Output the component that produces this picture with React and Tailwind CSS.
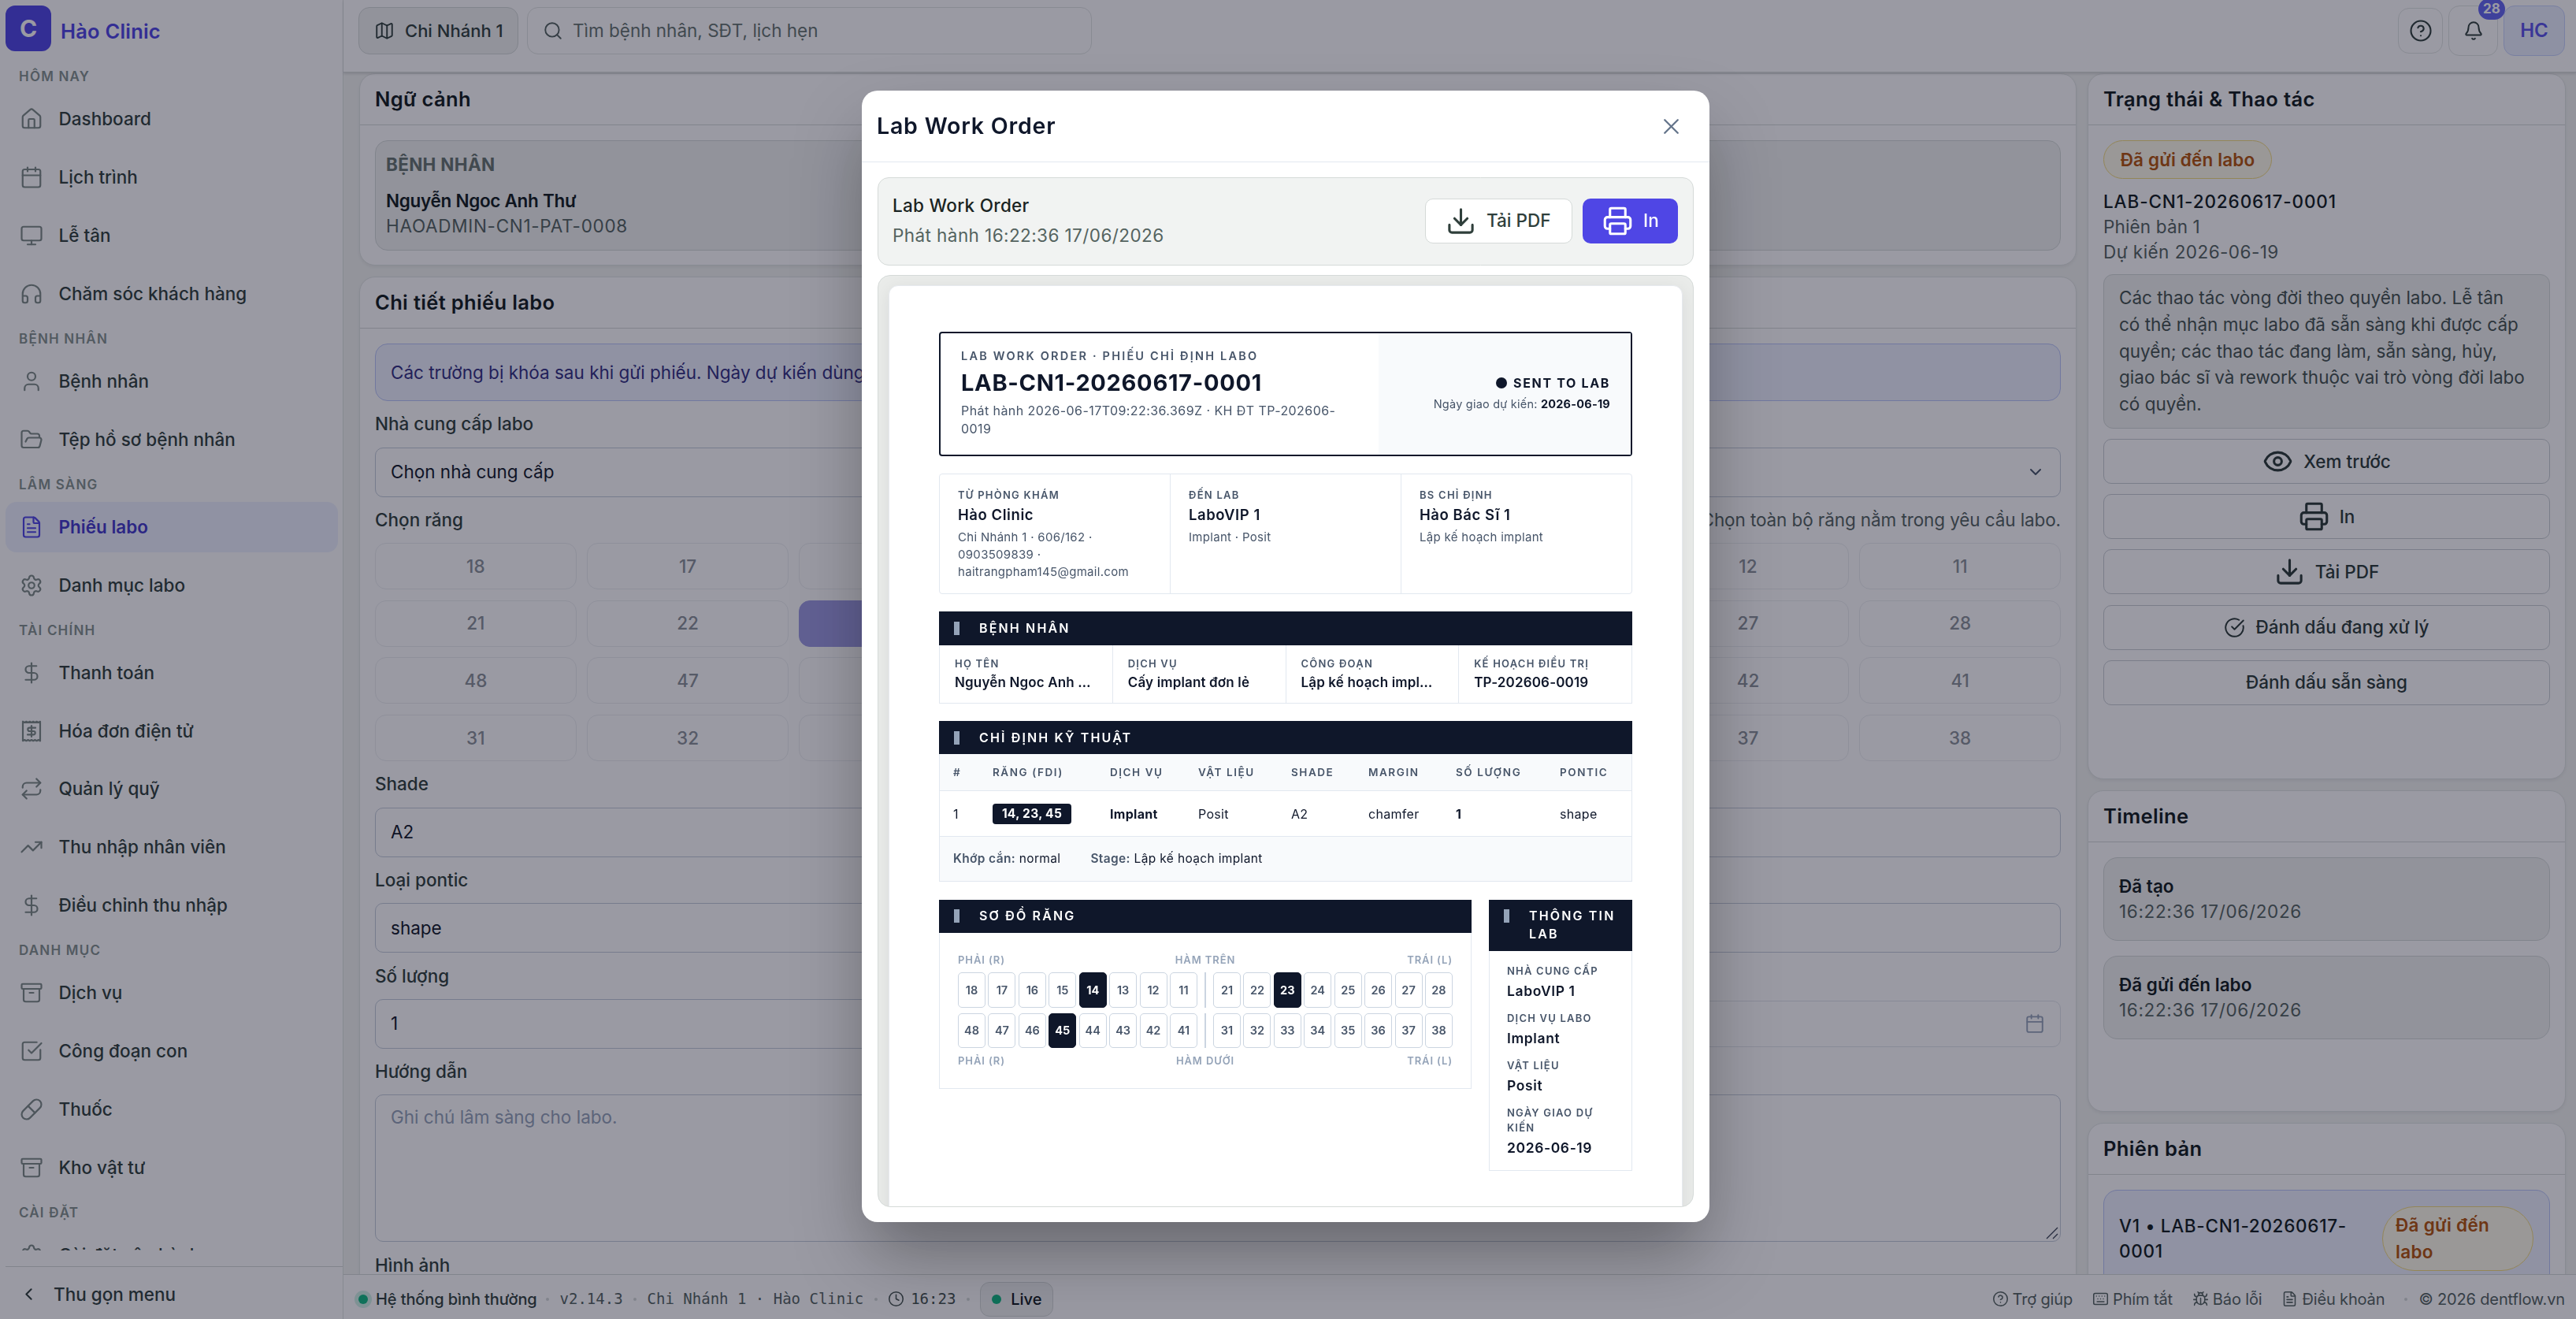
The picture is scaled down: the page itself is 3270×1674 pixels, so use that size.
import React from "react";
import {
  Archive,
  Bell,
  Bug,
  Calendar,
  ChevronDown,
  ChevronLeft,
  CircleCheckBig,
  CircleQuestionMark,
  Clock,
  DollarSign,
  Download,
  Eye,
  FileText,
  FolderOpen,
  Headphones,
  House,
  Keyboard,
  Map,
  Monitor,
  Pill,
  Printer,
  Repeat,
  Search,
  Settings,
  SquareCheckBig,
  TrendingUp,
  User,
  X,
} from "lucide-react";

// Receipt with a zigzag top and bottom edge and a dollar sign inside
function ReceiptDollar({ size = 24, strokeWidth = 2, className }) {
  return (
    <svg
      width={size}
      height={size}
      viewBox="0 0 24 24"
      fill="none"
      stroke="currentColor"
      strokeWidth={strokeWidth}
      strokeLinecap="round"
      strokeLinejoin="round"
      className={className}
    >
      <path d="M3.2 2.2v19.6l1.76-1 1.76 1 1.76-1 1.76 1 1.76-1 1.76 1 1.76-1 1.76 1 1.76-1 1.76 1V2.2l-1.76 1-1.76-1-1.76 1-1.76-1-1.76 1-1.76-1-1.76 1-1.76-1-1.76 1z" />
      <path d="M16 8.5h-6a1.75 1.75 0 1 0 0 3.5h4a1.75 1.75 0 1 1 0 3.5H8" />
      <path d="M12 17.5v-11" />
    </svg>
  );
}

const NAV = [
  {
    title: "HÔM NAY",
    items: [
      { label: "Dashboard", icon: House },
      { label: "Lịch trình", icon: Calendar },
      { label: "Lễ tân", icon: Monitor },
      { label: "Chăm sóc khách hàng", icon: Headphones },
    ],
  },
  {
    title: "BỆNH NHÂN",
    items: [
      { label: "Bệnh nhân", icon: User },
      { label: "Tệp hồ sơ bệnh nhân", icon: FolderOpen },
    ],
  },
  {
    title: "LÂM SÀNG",
    items: [
      { label: "Phiếu labo", icon: FileText, active: true },
      { label: "Danh mục labo", icon: Settings },
    ],
  },
  {
    title: "TÀI CHÍNH",
    items: [
      { label: "Thanh toán", icon: DollarSign },
      { label: "Hóa đơn điện tử", icon: ReceiptDollar },
      { label: "Quản lý quỹ", icon: Repeat },
      { label: "Thu nhập nhân viên", icon: TrendingUp },
      { label: "Điều chỉnh thu nhập", icon: DollarSign },
    ],
  },
  {
    title: "DANH MỤC",
    items: [
      { label: "Dịch vụ", icon: Archive },
      { label: "Công đoạn con", icon: SquareCheckBig },
      { label: "Thuốc", icon: Pill },
      { label: "Kho vật tư", icon: Archive },
    ],
  },
  {
    title: "CÀI ĐẶT",
    items: [{ label: "Cài đặt vận hành", icon: Settings }],
  },
];

const UPPER = [18, 17, 16, 15, 14, 13, 12, 11, 21, 22, 23, 24, 25, 26, 27, 28];
const LOWER = [48, 47, 46, 45, 44, 43, 42, 41, 31, 32, 33, 34, 35, 36, 37, 38];
const SELECTED = [14, 23, 45];

function Sidebar() {
  return (
    <aside className="w-[436px] shrink-0 h-full bg-white border-r border-[#dfe3e1] flex flex-col">
      <div className="h-[72px] shrink-0 flex items-start pl-[7px] pt-[7px]">
        <div className="w-[58px] h-[58px] rounded-xl bg-[#4f46e5] text-white text-[30px] font-bold flex items-center justify-center">
          C
        </div>
        <div className="ml-[12px] h-[66px] flex items-center text-[25.5px] font-semibold tracking-[0.2px] text-[#4f46e5]">
          Hào Clinic
        </div>
      </div>

      <nav className="h-[1515px] shrink-0 overflow-hidden">
        {NAV.map((group) => (
          <div key={group.title}>
            <div className="h-[47.2px] pt-[5px] pl-6 flex items-center text-[17px] font-semibold tracking-[1.2px] text-[#84918d]">
              {group.title}
            </div>
            <div className="flex flex-col gap-[9.8px] pl-[7px] pr-[6px]">
              {group.items.map(({ label, icon: Icon, active }) => (
                <div
                  key={label}
                  className={`h-16 shrink-0 rounded-[14px] flex items-center pl-[17.5px] text-[22.5px] ${
                    active
                      ? "bg-[#eef2ff] text-[#4338ca] font-semibold"
                      : "text-[#2f3f3b] font-medium"
                  }`}
                >
                  <Icon
                    size={30}
                    strokeWidth={1.75}
                    className={active ? "text-[#4f46e5]" : "text-[#7c8a86]"}
                  />
                  <span className="ml-5 whitespace-nowrap">{label}</span>
                </div>
              ))}
            </div>
          </div>
        ))}
      </nav>

      <div className="mt-5 ml-[7px] flex-1 border-t border-[#d5dad8] flex items-center pl-[17px] pt-[3px] text-[22.5px] font-medium text-[#2f3f3b]">
        <ChevronLeft size={25} strokeWidth={2} />
        <span className="ml-[19px]">Thu gọn menu</span>
      </div>
    </aside>
  );
}

function Topbar() {
  return (
    <header className="h-[92px] shrink-0 bg-white border-b border-[#d5dad8] shadow-[0_2px_3px_rgba(0,0,0,0.12)] relative flex items-start pl-[19px] pr-[14px]">
      <div className="mt-[9px] w-[203px] h-[60px] rounded-[14px] border border-[#d5dad8] bg-[#f1f3f2] flex items-center pl-[19px] text-[22px] font-medium text-[#2f3f3b] whitespace-nowrap">
        <Map size={26} strokeWidth={1.75} />
        <span className="ml-[13px]">Chi Nhánh 1</span>
      </div>
      <div className="mt-[9px] ml-[11px] w-[717px] h-[60px] rounded-[14px] border border-[#e1e5e3] flex items-center pl-[19px] text-[22.5px] text-[#66746f]">
        <Search size={26} strokeWidth={1.75} className="text-[#54635f]" />
        <span className="ml-[12px]">Tìm bệnh nhân, SĐT, lịch hẹn</span>
      </div>

      <div className="ml-auto flex items-start gap-[7px]">
        <div className="mt-[10px] w-[57px] h-[58px] rounded-[14px] border border-[#e1e5e3] flex items-center justify-center text-[#2f3f3b]">
          <CircleQuestionMark size={30} strokeWidth={1.7} />
        </div>
        <div className="relative mt-[7px] w-[63px] h-[64px] rounded-[14px] border border-[#e1e5e3] flex items-center justify-center text-[#2f3f3b]">
          <Bell size={26} strokeWidth={1.8} />
          <span className="absolute -top-[10px] left-[37px] w-[34px] h-[27px] rounded-full bg-[#6366f1] text-white text-[17px] font-bold flex items-center justify-center">
            28
          </span>
        </div>
        <div className="mt-[7px] w-[78px] h-[64px] rounded-[14px] border border-[#c7d2fe] bg-[#eaf0ff] flex items-center justify-center text-[24px] font-semibold text-[#5b54ea]">
          HC
        </div>
      </div>
    </header>
  );
}

function Card({ title, className, children }) {
  return (
    <section
      className={`shrink-0 bg-white border border-[#e1e5e3] rounded-[20px] shadow-[0_2px_4px_rgba(0,0,0,0.06)] ${className}`}
    >
      <h2 className="h-[65px] px-[19px] border-b border-[#d5dad8] flex items-center text-[25.5px] font-semibold tracking-[0.35px] text-[#101a1c]">
        {title}
      </h2>
      {children}
    </section>
  );
}

function FieldLabel({ children }) {
  return (
    <div className="h-[58.6px] flex items-center text-[22.5px] font-medium text-[#2f3f3b]">
      {children}
    </div>
  );
}

function TextField({ value }) {
  return (
    <div className="h-[63px] rounded-[10px] border border-[#c3ccd9] px-[19px] flex items-center text-[22.5px] text-[#101828]">
      {value}
    </div>
  );
}

function ToothPicker() {
  const teeth = [...UPPER, ...LOWER];
  return (
    <div className="grid grid-cols-8 gap-x-[13.5px] gap-y-[13.6px]">
      {teeth.map((n) => (
        <div
          key={n}
          className={`h-[59px] rounded-[14px] border flex items-center justify-center text-[22.5px] font-medium ${
            SELECTED.includes(n)
              ? "bg-[#9e9ce4] border-[#9e9ce4] text-white"
              : "border-[#eceef0] text-[#8a9198]"
          }`}
        >
          {n}
        </div>
      ))}
    </div>
  );
}

function MainColumn() {
  return (
    <div className="w-[2180px] flex flex-col gap-[14px]">
      <Card title="Ngữ cảnh" className="h-[244px]">
        <div className="mt-[19px] mx-[19px] h-[140px] rounded-2xl border border-[#d5dad8] bg-[#f1f3f2] px-[13px] pt-[14px] text-[22.5px] leading-8">
          <div className="font-bold text-[#66746f] tracking-[0.3px]">
            BỆNH NHÂN
          </div>
          <div className="mt-[14px] font-semibold tracking-[-0.3px] text-[#101a1c]">
            Nguyễn Ngoc Anh Thư
          </div>
          <div className="text-[#54635f] tracking-[0.7px]">
            HAOADMIN-CN1-PAT-0008
          </div>
        </div>
      </Card>

      <Card title="Chi tiết phiếu labo" className="h-[1600px]">
        <div className="px-[19px] pt-[19px]">
          <div className="h-[73px] rounded-2xl border border-[#b9c5f8] bg-[#eef2ff] px-[19px] flex items-center text-[22.5px] text-[#312e81] whitespace-nowrap">
            Các trường bị khóa sau khi gửi phiếu. Ngày dự kiến dùng để theo dõi
            tiến độ labo.
          </div>
          <FieldLabel>Nhà cung cấp labo</FieldLabel>
          <div className="h-[63px] rounded-[10px] border border-[#c3ccd9] pl-[19px] pr-[19px] flex items-center justify-between text-[22.5px] text-[#101828]">
            Chọn nhà cung cấp
            <ChevronDown size={24} strokeWidth={2} className="text-[#475569]" />
          </div>
          <div className="flex justify-between">
            <FieldLabel>Chọn răng</FieldLabel>
            <div className="flex items-center text-[22.5px] tracking-[-0.1px] text-[#54635f]">
              Chọn toàn bộ răng nằm trong yêu cầu labo.
            </div>
          </div>
          <ToothPicker />
          <FieldLabel>Shade</FieldLabel>
          <TextField value="A2" />
          <FieldLabel>Loại pontic</FieldLabel>
          <TextField value="shape" />
          <div className="grid grid-cols-2 gap-x-[14px]">
            <div>
              <FieldLabel>Số lượng</FieldLabel>
              <TextField value="1" />
            </div>
            <div>
              <FieldLabel>Ngày dự kiến</FieldLabel>
              <div className="mt-[2px] h-[59px] rounded-[10px] border border-[#e1e5ea] pr-[19px] flex items-center justify-end text-[#94a3b8]">
                <Calendar size={26} strokeWidth={1.75} />
              </div>
            </div>
          </div>
          <FieldLabel>Hướng dẫn</FieldLabel>
          <div className="relative h-[187px] rounded-[10px] border border-[#c3ccd9] px-[19px] pt-[12px] text-[22.5px] leading-8 text-[#94a3b8]">
            Ghi chú lâm sàng cho labo.
            <svg
              width="16"
              height="16"
              viewBox="0 0 16 16"
              stroke="#374151"
              strokeWidth="1.3"
              className="absolute right-[2px] bottom-[2px]"
            >
              <path d="M1 15 15 1M9 15l6-6" />
            </svg>
          </div>
          <FieldLabel>Hình ảnh</FieldLabel>
        </div>
      </Card>
    </div>
  );
}

function ActionButton({ icon: Icon, size = 39, stroke = 1.9, children }) {
  return (
    <div className="h-[57px] rounded-[10px] border border-[#c9ced3] flex items-center justify-center gap-[13px] text-[22.5px] font-medium text-[#2a3936]">
      {Icon && <Icon size={size} strokeWidth={stroke} />}
      {children}
    </div>
  );
}

function TimelineItem({ title }) {
  return (
    <div className="h-[106px] rounded-[18px] border border-[#d5dad8] bg-[#f1f3f2] px-[19px] pt-5 text-[22.5px] leading-[31.5px]">
      <div className="font-semibold text-[#101a1c]">{title}</div>
      <div className="tracking-[0.65px] text-[#54635f]">
        16:22:36 17/06/2026
      </div>
    </div>
  );
}

function SideColumn() {
  return (
    <div className="w-[607px] flex flex-col gap-[14px]">
      <Card title="Trạng thái & Thao tác" className="h-[896px]">
        <div className="px-[19px] pt-[19px] text-[22.5px]">
          <span className="h-[49px] w-[214px] rounded-full border border-[#f3dc7c] bg-[#fffbeb] flex items-center justify-center font-semibold tracking-[0.15px] text-[#b45309]">
            Đã gửi đến labo
          </span>
          <div className="mt-[13px] leading-8 text-[#54635f]">
            <div className="font-medium tracking-[0.9px] text-[#101a1c]">
              LAB-CN1-20260617-0001
            </div>
            <div className="tracking-[0.15px]">Phiên bản 1</div>
            <div className="tracking-[0.45px]">Dự kiến 2026-06-19</div>
          </div>
          <div className="mt-3 h-[196px] rounded-xl border border-[#d5dad8] bg-[#f1f3f2] pl-[19px] pt-[12px] leading-[33.8px] text-[#44524e] whitespace-nowrap">
            Các thao tác vòng đời theo quyền labo. Lễ tân
            <br />
            có thể nhận mục labo đã sẵn sàng khi được cấp
            <br />
            quyền; các thao tác đang làm, sẵn sàng, hủy,
            <br />
            giao bác sĩ và rework thuộc vai trò vòng đời labo
            <br />
            có quyền.
          </div>
          <div className="mt-[13px] flex flex-col gap-[13.2px]">
            <ActionButton icon={Eye}>Xem trước</ActionButton>
            <ActionButton icon={Printer}>In</ActionButton>
            <ActionButton icon={Download}>Tải PDF</ActionButton>
            <ActionButton icon={CircleCheckBig} size={27} stroke={1.75}>
              Đánh dấu đang xử lý
            </ActionButton>
            <ActionButton>Đánh dấu sẵn sàng</ActionButton>
          </div>
        </div>
      </Card>

      <Card title="Timeline" className="h-[408px]">
        <div className="px-[19px] pt-[19px] flex flex-col gap-[19px]">
          <TimelineItem title="Đã tạo" />
          <TimelineItem title="Đã gửi đến labo" />
        </div>
      </Card>

      <Card title="Phiên bản" className="h-[400px]">
        <div className="mt-[19px] mx-[19px] h-[200px] rounded-[18px] border border-[#b9c5f8] bg-[#eef2ff] pl-[19px] pr-5 pt-5 flex items-start text-[22.5px]">
          <div className="pt-[9px] leading-[32px] font-medium tracking-[0.7px] text-[#101a1c] whitespace-nowrap">
            V1 • LAB-CN1-20260617-
            <br />
            0001
          </div>
          <div className="ml-auto w-[192px] shrink-0 h-[82px] rounded-[41px] border border-[#f3dc7c] bg-[#fffbeb] pl-4 pt-[6px] leading-[34px] font-semibold tracking-[0.3px] text-[#b45309]">
            Đã gửi đến
            <br />
            labo
          </div>
        </div>
      </Card>
    </div>
  );
}

function Dot() {
  return <span className="w-1 h-1 rounded-full bg-[#d5dad8]" />;
}

function StatusBar() {
  const mono = "font-['DejaVu_Sans_Mono',monospace] text-[19px]";
  const links = [
    { label: "Trợ giúp", icon: CircleQuestionMark },
    { label: "Phím tắt", icon: Keyboard },
    { label: "Báo lỗi", icon: Bug },
    { label: "Điều khoản", icon: FileText },
  ];
  return (
    <footer className="h-[57px] shrink-0 bg-white border-t border-[#d5dad8] pt-[5px] pl-[19px] pr-[14px] flex items-center text-[20px] text-[#54635f] whitespace-nowrap">
      <span className="w-3 h-3 rounded-full bg-[#10b981] shadow-[0_0_0_5px_rgba(16,185,129,0.2)]" />
      <span className="ml-[10px] w-[203px] font-medium tracking-[-0.1px] text-[#2f3f3b]">
        Hệ thống bình thường
      </span>
      <span className="ml-[13px] flex items-center gap-[13.5px]">
        <Dot />
        <span className={mono}>v2.14.3</span>
        <Dot />
        <span className={mono}>Chi Nhánh 1 · Hào Clinic</span>
        <Dot />
        <span className="flex items-center gap-2 text-[#44524e]">
          <Clock size={21} strokeWidth={1.75} />
          <span className={mono}>16:23</span>
        </span>
        <Dot />
        <span className="w-[93px] h-[44px] rounded-xl border border-[#d5dad8] bg-[#f1f3f2] flex items-center justify-center gap-3 text-[#101a1c] font-medium">
          <span className="w-3 h-3 rounded-full bg-[#10b981]" />
          Live
        </span>
      </span>
      <span className="ml-auto flex items-center tracking-[-0.15px]">
        {links.map(({ label, icon: Icon }) => (
          <span
            key={label}
            className="flex items-center gap-[5px] mr-[25px] last-of-type:mr-0"
          >
            <Icon size={21} strokeWidth={1.75} />
            {label}
          </span>
        ))}
        <Dot />
        <span className="ml-[14px]">© 2026 dentflow.vn</span>
      </span>
    </footer>
  );
}

function SectionBar({ children, className = "h-[43px] pt-[10px]" }) {
  return (
    <div
      className={`bg-[#0f172a] text-white pl-[19px] flex items-start text-[16px] leading-[23px] font-semibold tracking-[2.15px] whitespace-nowrap ${className}`}
    >
      <span className="mt-[3px] w-[7px] h-[17px] shrink-0 bg-[#94a3b8]" />
      <span className="ml-[25px]">{children}</span>
    </div>
  );
}

function Party({ label, name, children }) {
  return (
    <div className="flex-1 px-[23px] pt-[16px] border-r border-[#e2e8f0] last:border-r-0">
      <div className="text-[13px] leading-5 font-semibold tracking-[1.25px] text-[#475569]">
        {label}
      </div>
      <div className="mt-px text-[18.5px] leading-7 font-semibold tracking-[0.55px] text-[#0f172a]">
        {name}
      </div>
      <div className="mt-1 text-[15px] leading-[22px] tracking-[0.3px] text-[#475569] whitespace-nowrap">
        {children}
      </div>
    </div>
  );
}

function PatientCell({ label, value }) {
  return (
    <div className="flex-1 min-w-0 pl-[19px] pr-6 pt-[13px] border-r border-[#e2e8f0] last:border-r-0">
      <div className="text-[13px] leading-5 font-semibold tracking-[1.2px] text-[#475569] whitespace-nowrap">
        {label}
      </div>
      <div className="mt-px text-[17px] leading-[26px] font-semibold tracking-[0.15px] text-[#0f172a] truncate">
        {value}
      </div>
    </div>
  );
}

function OrderTable() {
  const cols = "grid grid-cols-[50px_149px_112px_118px_98px_111px_132px_1fr]";
  return (
    <div className="border border-t-0 border-[#e2e8f0]">
      <div
        className={`${cols} h-[47px] pl-[17px] bg-[#f8fafc] border-b border-[#e2e8f0] items-center text-[13.5px] font-semibold tracking-[1.55px] text-[#475569] whitespace-nowrap`}
      >
        <span>#</span>
        <span>RĂNG (FDI)</span>
        <span>DỊCH VỤ</span>
        <span>VẬT LIỆU</span>
        <span>SHADE</span>
        <span>MARGIN</span>
        <span>SỐ LƯỢNG</span>
        <span>PONTIC</span>
      </div>
      <div
        className={`${cols} h-[58px] pl-[17px] border-b border-[#e2e8f0] items-center text-[16px] tracking-[0.3px] text-[#0f172a]`}
      >
        <span>1</span>
        <span>
          <span className="inline-flex w-[100px] h-[26px] items-center justify-center rounded-[4px] bg-[#0f172a] text-white font-bold text-[15.5px]">
            14, 23, 45
          </span>
        </span>
        <span className="font-bold">Implant</span>
        <span>Posit</span>
        <span>A2</span>
        <span>chamfer</span>
        <span className="font-bold">1</span>
        <span>shape</span>
      </div>
      <div className="h-[56px] pl-[17px] bg-[#f8fafc] flex items-center gap-[38px] text-[15.5px] tracking-[0.35px] text-[#0f172a]">
        <span>
          <b className="font-semibold text-[#475569]">Khớp cắn:</b> normal
        </span>
        <span>
          <b className="font-semibold text-[#475569]">Stage:</b> Lập kế hoạch
          implant
        </span>
      </div>
    </div>
  );
}

function ToothRow({ teeth, className }) {
  const half = (list) =>
    list.map((n) => (
      <span
        key={n}
        className={`flex-1 rounded-[5px] border flex items-center justify-center ${
          SELECTED.includes(n)
            ? "bg-[#0f172a] border-[#0f172a] text-white font-bold"
            : "border-[#cbd5e1] text-[#475569]"
        }`}
      >
        {n}
      </span>
    ));
  return (
    <div
      className={`flex items-stretch text-[14.5px] font-semibold ${className}`}
    >
      <div className="flex-1 flex gap-[3.4px]">{half(teeth.slice(0, 8))}</div>
      <div className="mx-[9px] w-[2px] bg-[#cbd5e1]" />
      <div className="flex-1 flex gap-[3.4px]">{half(teeth.slice(8))}</div>
    </div>
  );
}

function JawLabels({ middle }) {
  return (
    <div className="h-5 grid grid-cols-3 items-center text-[13px] font-semibold tracking-[0.9px] text-[#94a3b8]">
      <span>PHẢI (R)</span>
      <span className="text-center">{middle}</span>
      <span className="text-right">TRÁI (L)</span>
    </div>
  );
}

function LabInfo({ label, value }) {
  return (
    <div className="mb-[14px]">
      <div className="text-[13px] leading-[19px] font-semibold tracking-[1.2px] text-[#475569]">
        {label}
      </div>
      <div className="mt-[4px] text-[17.5px] leading-[23px] font-semibold tracking-[0.6px] text-[#0f172a]">
        {value}
      </div>
    </div>
  );
}

function WorkOrder() {
  return (
    <div className="mx-[13px] mt-[12px] h-[1300px] rounded-t-xl bg-white border border-[#e6e9ee] shadow-[0_4px_24px_rgba(15,23,42,0.08)] px-[63px] pt-[58px]">
      <div className="h-[158px] border-2 border-[#0f172a] rounded-[4px] flex">
        <div className="w-[556px] pl-[26px] pt-[19px]">
          <div className="text-[14.5px] leading-5 font-semibold tracking-[2.2px] text-[#475569] whitespace-nowrap">
            LAB WORK ORDER · PHIẾU CHỈ ĐỊNH LABO
          </div>
          <div className="mt-[6px] text-[29px] leading-9 font-bold tracking-[0.7px] text-[#0f172a] whitespace-nowrap">
            LAB-CN1-20260617-0001
          </div>
          <div className="mt-[6px] text-[16px] leading-[22.5px] tracking-[0.43px] text-[#475569] whitespace-nowrap">
            Phát hành 2026-06-17T09:22:36.369Z · KH ĐT TP-202606-
            <br />
            0019
          </div>
        </div>
        <div className="flex-1 bg-[#f8fafc] pr-[26px] pt-[51px] text-right">
          <div className="flex items-center justify-end gap-2 text-[16px] leading-6 font-bold tracking-[1.65px] text-[#0f172a]">
            <span className="w-[14px] h-[14px] rounded-full bg-[#0f172a]" />
            SENT TO LAB
          </div>
          <div className="mt-[4px] text-[14.5px] leading-[22px] tracking-[0.22px] text-[#475569]">
            Ngày giao dự kiến:{" "}
            <b className="font-bold text-[#0f172a]">2026-06-19</b>
          </div>
        </div>
      </div>

      <div className="mt-[22px] h-[153px] border border-[#e2e8f0] rounded-[4px] flex">
        <Party label="TỪ PHÒNG KHÁM" name="Hào Clinic">
          Chi Nhánh 1 · 606/162 ·
          <br />
          0903509839 ·
          <br />
          haitrangpham145@gmail.com
        </Party>
        <Party label="ĐẾN LAB" name="LaboVIP 1">
          Implant · Posit
        </Party>
        <Party label="BS CHỈ ĐỊNH" name="Hào Bác Sĩ 1">
          Lập kế hoạch implant
        </Party>
      </div>

      <div className="mt-[22px]">
        <SectionBar>BỆNH NHÂN</SectionBar>
        <div className="h-[74px] flex border border-t-0 border-[#e2e8f0]">
          <PatientCell label="HỌ TÊN" value="Nguyễn Ngoc Anh Thư" />
          <PatientCell label="DỊCH VỤ" value="Cấy implant đơn lẻ" />
          <PatientCell label="CÔNG ĐOẠN" value="Lập kế hoạch implant" />
          <PatientCell label="KẾ HOẠCH ĐIỀU TRỊ" value="TP-202606-0019" />
        </div>
      </div>

      <div className="mt-[22px]">
        <SectionBar className="h-[42px] pt-[10px]">CHỈ ĐỊNH KỸ THUẬT</SectionBar>
        <OrderTable />
      </div>

      <div className="mt-[23px] flex items-start gap-[22px]">
        <div className="w-[676px]">
          <SectionBar className="h-[42px] pt-[9px]">SƠ ĐỒ RĂNG</SectionBar>
          <div className="h-[198px] border border-t-0 border-[#e2e8f0] px-[23px] pt-[25px]">
            <JawLabels middle="HÀM TRÊN" />
            <ToothRow teeth={UPPER} className="mt-[5px] h-[45px]" />
            <ToothRow teeth={LOWER} className="mt-[7px] h-[44px]" />
            <div className="h-[7px]" />
            <JawLabels middle="HÀM DƯỚI" />
          </div>
        </div>
        <div className="flex-1">
          <SectionBar className="h-[65px] pt-[9px]">
            THÔNG TIN
            <br />
            LAB
          </SectionBar>
          <div className="h-[279px] border border-t-0 border-[#e2e8f0] pl-[22px] pt-[16px] whitespace-nowrap">
            <LabInfo label="NHÀ CUNG CẤP" value="LaboVIP 1" />
            <LabInfo label="DỊCH VỤ LABO" value="Implant" />
            <LabInfo label="VẬT LIỆU" value="Posit" />
            <LabInfo
              label={
                <>
                  NGÀY GIAO DỰ
                  <br />
                  KIẾN
                </>
              }
              value="2026-06-19"
            />
          </div>
        </div>
      </div>
    </div>
  );
}

function PreviewModal() {
  return (
    <div className="fixed inset-0 bg-[#0f0f23]/42 flex items-center justify-center pr-[6px] pb-[8px]">
      <div className="w-[1076px] h-[1436px] rounded-[20px] bg-white shadow-[0_45px_90px_-8px_rgba(0,0,0,0.34)] flex flex-col overflow-hidden">
        <div className="h-[91px] shrink-0 border-b border-[#e2e8f0] flex items-center justify-between pl-[19px] pr-[32px]">
          <h1 className="text-[28.5px] font-semibold tracking-[0.8px] text-[#0f172a]">
            Lab Work Order
          </h1>
          <X size={33} strokeWidth={1.7} className="text-[#64748b]" />
        </div>

        <div className="mx-5 mt-[19px] h-[112px] shrink-0 rounded-[14px] border border-[#d5dad8] bg-[#f1f3f2] pl-[18px] pr-[19px] flex items-center text-[22.5px]">
          <div className="pb-[2px] leading-[38.5px]">
            <div className="font-medium tracking-[0.3px] text-[#1a2422]">
              Lab Work Order
            </div>
            <div className="tracking-[0.42px] text-[#54635f]">
              Phát hành 16:22:36 17/06/2026
            </div>
          </div>
          <div className="mb-[2px] ml-auto w-[187px] h-[57px] rounded-[10px] border border-[#d5dad8] bg-white flex items-center pl-[25px] gap-[13px] font-medium text-[#2f3f3b]">
            <Download size={39} strokeWidth={1.9} />
            Tải PDF
          </div>
          <div className="mb-[2px] ml-[13px] w-[121px] h-[57px] rounded-[10px] bg-[#4f46e5] flex items-center pl-[25px] gap-[13px] font-medium text-white">
            <Printer size={39} strokeWidth={1.9} />
            In
          </div>
        </div>

        <div className="mx-5 mt-[12px] h-[1183px] shrink-0 rounded-2xl border border-[#d5dad8] bg-[#eaecea] overflow-hidden">
          <WorkOrder />
        </div>
      </div>
    </div>
  );
}

export default function App() {
  return (
    <div className="w-[3270px] h-[1674px] overflow-hidden bg-[#f3f5f2] flex font-['Inter','Noto_Sans',sans-serif]">
      <Sidebar />
      <div className="flex-1 min-w-0 h-full flex flex-col">
        <Topbar />
        <main className="h-[1525px] shrink-0 overflow-hidden pt-[1px] pl-5 flex items-start gap-[14px]">
          <MainColumn />
          <SideColumn />
        </main>
        <StatusBar />
      </div>
      <PreviewModal />
    </div>
  );
}
